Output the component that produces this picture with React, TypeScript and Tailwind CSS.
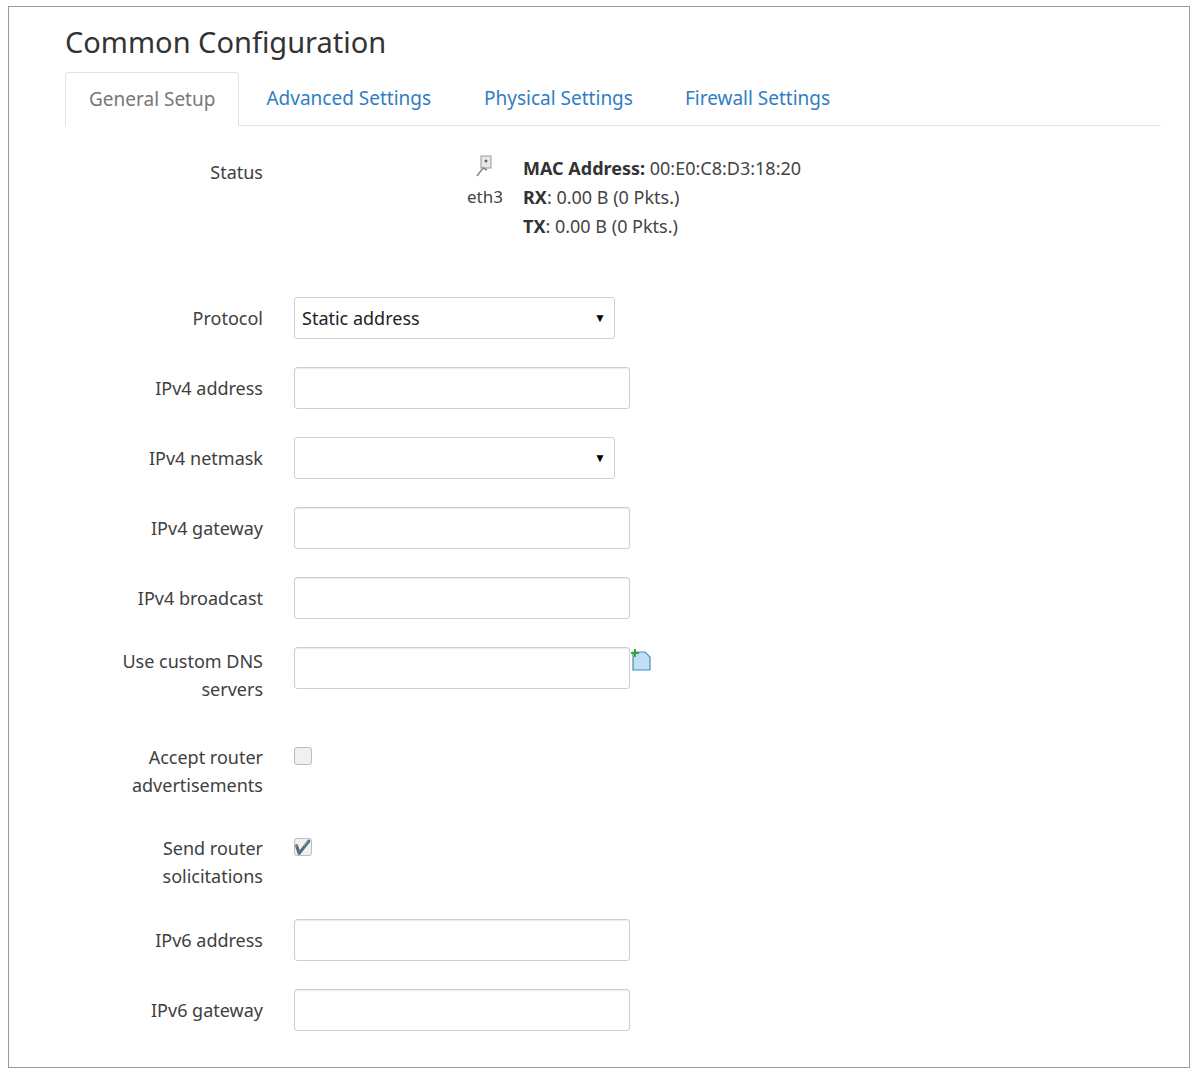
import React from "react";

const Label = ({ children }: { children: React.ReactNode }) => (
	<div className="w-[198px] shrink-0 text-right text-[18px] leading-[28px] text-[#404040]">
		{children}
	</div>
);

const TextBox = () => (
	<div className="h-[42px] w-[336px] rounded-[3px] border border-[#cfcfcf] bg-white shadow-[inset_0_1px_1px_rgba(0,0,0,0.08)]" />
);

const SelectBox = ({ value }: { value?: string }) => (
	<div className="flex h-[42px] w-[321px] items-center justify-between rounded-[3px] border border-[#cfcfcf] bg-white pl-[7px] pr-[8px] text-[18px] text-[#222]">
		<span>{value ?? ""}</span>
		<span className="text-[12px] text-black">▼</span>
	</div>
);

const CheckBox = ({ checked }: { checked?: boolean }) => (
	<div className="mt-[4px] flex h-[18px] w-[18px] items-center justify-center rounded-[3px] border border-[#bdbdbd] bg-[#f0f0f0] text-[14px] leading-none text-black">
		{checked ? "✔" : ""}
	</div>
);

export default function App() {
	return (
		<div className="h-[1073px] w-[1193px] bg-white pt-[6px] pr-[3px] pb-[5px] pl-[8px] [font-family:'Liberation_Sans',Arial,sans-serif]">
			<div className="h-full border border-[#9a9a9a] pl-[56px] pr-[28px]">
				<h1 className="pt-[18px] text-[29px] leading-[34px] text-[#333]">Common Configuration</h1>
				<div className="mt-[12px] flex items-end border-b border-[#e2e2e2] text-[19px]">
					<div className="-mb-px flex h-[54px] items-center rounded-t-[4px] border border-b-white border-[#e2e2e2] bg-white px-[23px] text-[#777]">
						General Setup
					</div>
					<div className="flex h-[54px] items-center px-[27px] text-[#2f7ec4]">Advanced Settings</div>
					<div className="flex h-[54px] items-center px-[26px] text-[#2f7ec4]">Physical Settings</div>
					<div className="flex h-[54px] items-center px-[26px] text-[#2f7ec4]">Firewall Settings</div>
				</div>

				<div className="mt-[32px] flex">
					<Label>Status</Label>
					<div className="ml-[198px] flex w-[48px] flex-col items-center text-[17px] text-[#444]">
						<svg width="20" height="24" viewBox="0 0 20 24" className="mt-[-4px]">
							<rect x="6" y="2" width="10" height="12" fill="#e8e8e8" stroke="#999" />
							<path d="M2 22 L8 14 L12 16" stroke="#888" strokeWidth="1.5" fill="none" />
							<circle cx="11" cy="7" r="1.5" fill="#666" />
						</svg>
						<span className="mt-[6px]">eth3</span>
					</div>
					<div className="ml-[14px] -mt-[4px] text-[18px] leading-[29px] text-[#444]">
						<div>
							<b className="text-[#333]">MAC Address:</b> 00:E0:C8:D3:18:20
						</div>
						<div>
							<b className="text-[#333]">RX</b>: 0.00 B (0 Pkts.)
						</div>
						<div>
							<b className="text-[#333]">TX</b>: 0.00 B (0 Pkts.)
						</div>
					</div>
				</div>

				<div className="mt-[56px] flex flex-col gap-[28px]">
					<div className="flex items-center gap-[31px]">
						<Label>Protocol</Label>
						<SelectBox value="Static address" />
					</div>
					<div className="flex items-center gap-[31px]">
						<Label>IPv4 address</Label>
						<TextBox />
					</div>
					<div className="flex items-center gap-[31px]">
						<Label>IPv4 netmask</Label>
						<SelectBox />
					</div>
					<div className="flex items-center gap-[31px]">
						<Label>IPv4 gateway</Label>
						<TextBox />
					</div>
					<div className="flex items-center gap-[31px]">
						<Label>IPv4 broadcast</Label>
						<TextBox />
					</div>
					<div className="flex items-start gap-[31px]">
						<Label>
							Use custom DNS
							<br />
							servers
						</Label>
						<div className="flex items-start">
							<TextBox />
							<svg width="24" height="24" viewBox="0 0 24 24" className="-ml-[1px] mt-[1px]">
								<path d="M4 4 H16 L21 9 V22 H4 Z" fill="#bfe0f5" stroke="#4a8bbd" strokeWidth="1.2" />
								<path d="M6 1 V9 M2 5 H10" stroke="#3aa33a" strokeWidth="2" />
							</svg>
						</div>
					</div>
					<div className="mt-[12px] flex items-start gap-[31px]">
						<Label>
							Accept router
							<br />
							advertisements
						</Label>
						<CheckBox />
					</div>
					<div className="mt-[7px] flex items-start gap-[31px]">
						<Label>
							Send router
							<br />
							solicitations
						</Label>
						<CheckBox checked />
					</div>
					<div className="mt-[1px] flex items-center gap-[31px]">
						<Label>IPv6 address</Label>
						<TextBox />
					</div>
					<div className="flex items-center gap-[31px]">
						<Label>IPv6 gateway</Label>
						<TextBox />
					</div>
				</div>
			</div>
		</div>
	);
}
